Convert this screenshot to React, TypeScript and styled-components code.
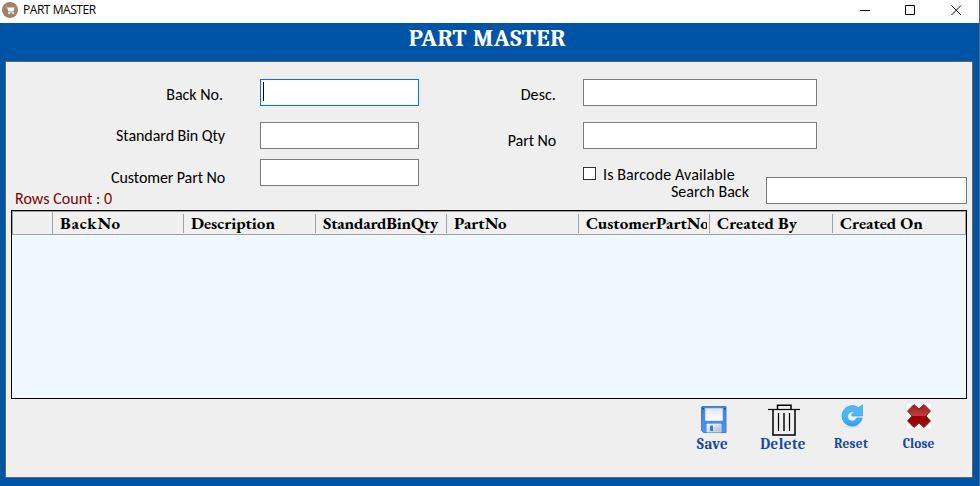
import React from "react";
import styled, { createGlobalStyle } from "styled-components";

const GlobalStyle = createGlobalStyle`
  * { box-sizing: border-box; }
  html, body { margin: 0; padding: 0; overflow: hidden; }
`;

const Window = styled.div`
  width: 980px;
  height: 486px;
  display: flex;
  flex-direction: column;
  background: #0054a6;
  border-right: 1px solid #5f6468;
  overflow: hidden;
`;

const TitleBar = styled.header`
  height: 23px;
  flex: none;
  display: flex;
  align-items: flex-start;
  background: #fff;
  padding-left: 2px;
`;

const AppIcon = styled.svg`
  width: 16px;
  height: 16px;
  margin-top: 2px;
`;

const WindowTitle = styled.span`
  flex: 1;
  margin: 1px 0 0 5px;
  font: 12px/18px "Open Sans", sans-serif;
  letter-spacing: -0.45px;
  color: #000;
`;

const WindowControls = styled.div`
  display: flex;
  gap: 35px;
  padding: 5px 17px 0 0;
  svg { display: block; width: 11px; height: 11px; }
`;

const Heading = styled.h1`
  height: 38px;
  flex: none;
  margin: 0;
  padding-right: 4px;
  text-align: center;
  font: bold 24px/31px Cambria, Caladea, "DejaVu Serif Condensed", serif;
  letter-spacing: 0.6px;
  color: #fff;
`;

const Panel = styled.main`
  width: 968px;
  height: 417px;
  flex: none;
  margin-left: 5px;
  border: 1px solid #646464;
  background: #efefef;
  display: flex;
  flex-direction: column;
`;

const Form = styled.form`
  height: 148px;
  flex: none;
  display: grid;
  grid-template-columns: 413px 548px;
  padding-top: 17px;
`;

const Column = styled.div`
  display: flex;
  flex-direction: column;
`;

const Field = styled.label<{ $gap: number }>`
  display: flex;
  height: 27px;
  flex: none;
  margin-bottom: ${(p) => p.$gap}px;
`;

const Caption = styled.span<{ $width?: number; $inset?: number; $drop?: number; $spacing?: number }>`
  display: block;
  width: ${(p) => (p.$width ? p.$width + "px" : "auto")};
  padding: ${(p) => p.$drop ?? 0}px ${(p) => p.$inset ?? 0}px 0 0;
  text-align: right;
  white-space: nowrap;
  font: 16px/18px Calibri, Carlito, Lato, sans-serif;
  letter-spacing: ${(p) => p.$spacing ?? 0}px;
  color: #000;
`;

const TextBox = styled.input<{ $width: number; $top?: number }>`
  width: ${(p) => p.$width}px;
  height: 27px;
  flex: none;
  margin: ${(p) => p.$top ?? 0}px 0 0;
  padding: 0 3px;
  border: 1px solid #7a7a7a;
  border-radius: 0;
  outline: none;
  background: #fff;
`;

const ActiveBox = styled.div`
  width: 159px;
  height: 27px;
  padding: 2px;
  border: 1px solid #0078d7;
  background: #fff;
`;

const Caret = styled.div`
  width: 1px;
  height: 19px;
  background: #000;
`;

const SearchRow = styled.div`
  display: flex;
  padding-left: 164px;
  height: 44px;
`;

const SearchCaptions = styled.div`
  width: 183px;
  padding-top: 17px;
`;

const CheckRow = styled.label`
  display: flex;
  gap: 7px;
  height: 17px;
`;

const CheckBox = styled.span`
  width: 13px;
  height: 13px;
  margin-top: 1px;
  border: 1px solid #333;
  background: #fff;
`;

const RowCount = styled.div`
  padding: 4px 0 0 9px;
  font: 16px/18px Calibri, Carlito, Lato, sans-serif;
  letter-spacing: 0.05px;
  color: #800000;
`;

const Grid = styled.section`
  width: 956px;
  height: 189px;
  flex: none;
  margin-left: 5px;
  border: 1px solid #000;
  background: #f0f8ff;
`;

const GridHeader = styled.div`
  height: 24px;
  display: grid;
  grid-template-columns: 40px 131px 132px 131px 132px 131px 123px 134px;
  border: 1px solid #a0a0a0;
  background: #f0f0f0;
`;

const HeaderCell = styled.div<{ $corner?: boolean }>`
  min-width: 0;
  height: ${(p) => (p.$corner ? 22 : 19)}px;
  margin-top: ${(p) => (p.$corner ? 0 : 2)}px;
  padding: 0 2px 0 7px;
  border-right: 1px solid #a0a0a0;
  &:last-child { border-right: 0; }
`;

const HeaderText = styled.div<{ $spacing: number }>`
  height: 19px;
  overflow-x: clip;
  overflow-y: visible;
  white-space: nowrap;
  font: bold 17px/18px Garamond, "EB Garamond", "Liberation Serif", serif;
  letter-spacing: ${(p) => p.$spacing}px;
  color: #000;
`;

const Actions = styled.footer`
  display: flex;
  padding: 4px 0 0 682px;
`;

const Action = styled.button<{ $width: number; $top: number }>`
  width: ${(p) => p.$width}px;
  height: 49px;
  margin: 0;
  padding: ${(p) => p.$top}px 0 0;
  display: flex;
  flex-direction: column;
  align-items: center;
  justify-content: space-between;
  border: 0;
  background: transparent;
  svg { display: block; flex: none; }
`;

const ActionText = styled.span<{ $size: number; $spacing: number; $nudge?: number }>`
  padding-right: ${(p) => p.$nudge ?? 2}px;
  font: bold ${(p) => p.$size}px/16px Cambria, Caladea, "DejaVu Serif Condensed", serif;
  letter-spacing: ${(p) => p.$spacing}px;
  white-space: nowrap;
  color: #17479e;
`;

const SaveIcon = () => (
  <svg width="26" height="27" viewBox="0 0 26 27">
    <defs>
      <linearGradient id="disk" x2="0" y2="1"><stop stopColor="#3d7ed8" /><stop offset="1" stopColor="#4b94f5" /></linearGradient>
      <linearGradient id="paper" x2="0" y2="1"><stop stopColor="#dce9fb" /><stop offset="1" stopColor="#fff" /></linearGradient>
      <linearGradient id="shutter" x2="1" y2="1"><stop stopColor="#fff" /><stop offset="1" stopColor="#aeb6c0" /></linearGradient>
    </defs>
    <path d="M1 .5h24v26H2.500L.5 24.500V1z" fill="url(#disk)" stroke="#3f7fd7" />
    <path d="M4 2h18v12q0 1-1 1H5q-1 0-1-1z" fill="url(#paper)" stroke="#6d9fe6" strokeWidth=".6" />
    <path d="M1.500 2h1.500v1.500H1.500zM23 2h1.500v1.500H23z" fill="#174e9f" />
    <path d="M6 18h14v8H6z" fill="url(#shutter)" stroke="#dce8f8" strokeWidth=".8" />
    <path d="M9 19.500h3V25H9z" fill="#397bd9" />
  </svg>
);

const TrashIcon = () => (
  <svg width="32" height="32" viewBox="0 0 32 32" fill="none" stroke="#000">
    <path d="M0 5.500h32" strokeWidth="1.200" />
    <path d="M9.500 5V1.200H23V5M5 6v25h22V6" strokeWidth="1.500" />
    <path d="M10.500 9v18M21.500 9v18" strokeWidth="1.200" />
    <path d="M16 9v18" stroke="#444" strokeWidth="2" />
  </svg>
);

const ResetIcon = () => (
  <svg width="22" height="24" viewBox="0 0 22 24">
    <defs><linearGradient id="arrow" x2="0" y2="1"><stop stopColor="#58b4f5" /><stop offset=".5" stopColor="#42bdff" /><stop offset="1" stopColor="#329ff0" /></linearGradient></defs>
    <ellipse cx="11" cy="22.500" rx="7" ry="1" fill="#d1dce5" />
    <path d="M21.500.8V12H11V9.400H14.800A4.700 4.700 0 1 0 15.700 14H21.300A10.300 10.300 0 1 1 17.500 3.700z" fill="url(#arrow)" stroke="#3b9fe8" strokeWidth=".7" />
  </svg>
);

const CloseIcon = () => (
  <svg width="24" height="24" viewBox="0 0 24 24">
    <defs><linearGradient id="cross" x2="0" y2="1"><stop stopColor="#a51c20" /><stop offset=".48" stopColor="#b94040" /><stop offset=".5" stopColor="#960000" /><stop offset="1" stopColor="#a50b0d" /></linearGradient></defs>
    <path fill="#fff" d="M0 0h24v24H0z" />
    <path d="M7 .5 12 5 17 .5 23.500 7 19 12 23.500 17 17 23.500 12 19 7 23.500.5 17 5 12 .5 7z" fill="url(#cross)" stroke="#7d1717" strokeWidth=".9" strokeLinejoin="round" />
  </svg>
);

const headers: [string, number][] = [
  ["BackNo", 0.8], ["Description", 0], ["StandardBinQty", -0.2], ["PartNo", 0],
  ["CustomerPartNo", 0], ["Created By", 0.1], ["Created On", 0],
];

export default function App() {
  return (
    <Window>
      <GlobalStyle />
      <TitleBar>
        <AppIcon viewBox="0 0 16 16">
          <circle cx="8" cy="8" r="8" fill="#a28069" />
          <path d="M3.500 4.500h1.300l1.500 5h5.200l1-4H5.300z" fill="#fff" />
          <path d="M6 10.500h6" stroke="#d9c9be" />
          <circle cx="7" cy="11.500" r=".8" fill="#fff" /><circle cx="11" cy="11.500" r=".8" fill="#fff" />
        </AppIcon>
        <WindowTitle>PART MASTER</WindowTitle>
        <WindowControls>
          <svg viewBox="0 0 11 11"><path d="M1 5.500h10" stroke="#000" /></svg>
          <svg viewBox="0 0 11 11"><path d="M.5.5h9v9h-9z" fill="none" stroke="#000" /></svg>
          <svg viewBox="0 0 11 11"><path d="m.5.500 9.500 9.500M10 .5.500 10" stroke="#000" /></svg>
        </WindowControls>
      </TitleBar>
      <Heading>PART MASTER</Heading>
      <Panel>
        <Form>
          <Column>
            <Field $gap={16}>
              <Caption $width={254} $inset={37} $drop={7}>Back No.</Caption>
              <ActiveBox><Caret /></ActiveBox>
            </Field>
            <Field $gap={10}>
              <Caption $width={254} $inset={35} $drop={5} $spacing={-0.05}>Standard Bin Qty</Caption>
              <TextBox $width={159} />
            </Field>
            <Field $gap={0}>
              <Caption $width={254} $inset={35} $drop={10} $spacing={-0.1}>Customer Part No</Caption>
              <TextBox $width={159} />
            </Field>
            <RowCount>Rows Count : 0</RowCount>
          </Column>
          <Column>
            <Field $gap={16}>
              <Caption $width={164} $inset={27} $drop={7} $spacing={0.1}>Desc.</Caption>
              <TextBox $width={234} />
            </Field>
            <Field $gap={0}>
              <Caption $width={164} $inset={27} $drop={10} $spacing={-0.1}>Part No</Caption>
              <TextBox $width={234} />
            </Field>
            <SearchRow>
              <SearchCaptions>
                <CheckRow><CheckBox /><Caption $spacing={0.12}>Is Barcode Available</Caption></CheckRow>
                <Caption $inset={17} $spacing={0.05}>Search Back</Caption>
              </SearchCaptions>
              <TextBox $width={201} $top={28} aria-label="Search Back" />
            </SearchRow>
          </Column>
        </Form>
        <Grid>
          <GridHeader>
            <HeaderCell $corner />
            {headers.map(([name, spacing]) => (
              <HeaderCell key={name}><HeaderText $spacing={spacing}>{name}</HeaderText></HeaderCell>
            ))}
          </GridHeader>
        </Grid>
        <Actions>
          <Action $width={52} $top={3}><SaveIcon /><ActionText $size={15} $spacing={0.45} $nudge={3}>Save</ActionText></Action>
          <Action $width={88} $top={1}><TrashIcon /><ActionText $size={15} $spacing={0.45}>Delete</ActionText></Action>
          <Action $width={48} $top={1}><ResetIcon /><ActionText $size={13.3} $spacing={0.3}>Reset</ActionText></Action>
          <Action $width={86} $top={1}><CloseIcon /><ActionText $size={13.3} $spacing={0.1} $nudge={1}>Close</ActionText></Action>
        </Actions>
      </Panel>
    </Window>
  );
}
